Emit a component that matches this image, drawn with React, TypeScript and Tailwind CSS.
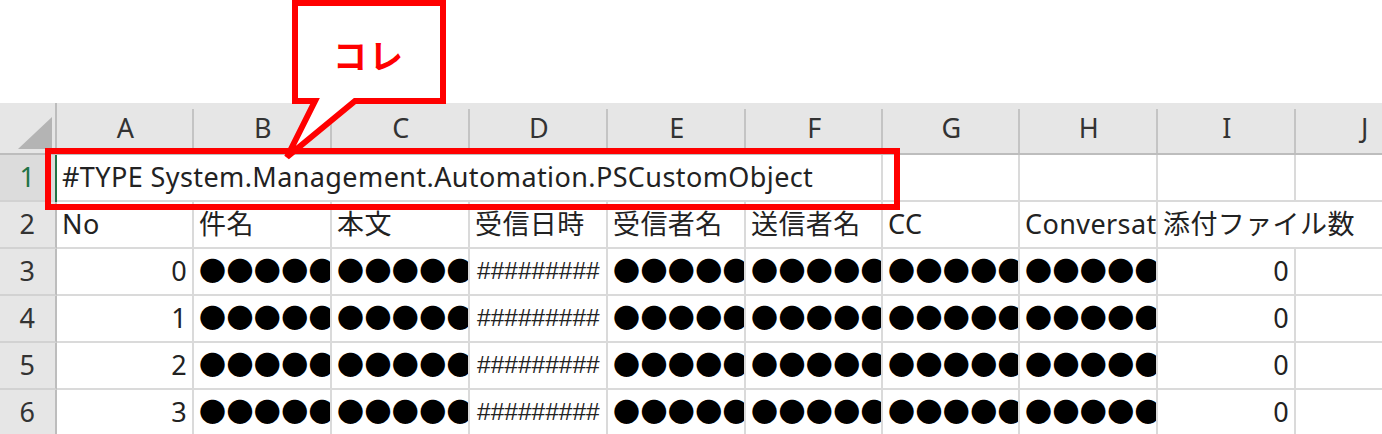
import React from 'react';

const cols = ['A', 'B', 'C', 'D', 'E', 'F', 'G', 'H', 'I', 'J'];
const dots = '●●●●●●●●●●●●';

const cell =
  'border-r-2 border-b-2 border-[#dadada] overflow-hidden whitespace-nowrap flex items-center px-[5px] bg-white';

function HeaderCell({ label }: { label: string }) {
  return (
    <div className="relative bg-[#e6e6e6] border-b-2 border-[#bdbdbd] flex items-center justify-center text-[#333] after:absolute after:right-0 after:top-[6px] after:bottom-0 after:w-[2px] after:bg-[#c4c4c4]">
      {label}
    </div>
  );
}

function RowHead({ n, active }: { n: number; active?: boolean }) {
  return (
    <div
      className={`border-r-2 border-b-2 border-r-[#bdbdbd] border-b-[#d2d2d2] flex items-center justify-center ${
        active ? 'bg-[#dcdcdc] text-[#217346]' : 'bg-[#e6e6e6] text-[#333]'
      }`}
    >
      {n}
    </div>
  );
}

function DataRow({ n, no }: { n: number; no: number }) {
  return (
    <>
      <RowHead n={n} />
      <div className={`${cell} justify-end`}>{no}</div>
      <div className={`${cell} text-black`}>{dots}</div>
      <div className={`${cell} text-black`}>{dots}</div>
      <div className={`${cell} text-[24.5px] tracking-normal pl-[7px] pr-0 font-['Liberation_Sans',sans-serif]`}>
        #########
      </div>
      <div className={`${cell} text-black`}>{dots}</div>
      <div className={`${cell} text-black`}>{dots}</div>
      <div className={`${cell} text-black`}>{dots}</div>
      <div className={`${cell} text-black`}>{dots}</div>
      <div className={`${cell} justify-end`}>0</div>
      <div className={cell}></div>
    </>
  );
}

export default function App() {
  return (
    <div className="relative w-[1382px] h-[434px] overflow-hidden bg-white text-[27px] tracking-[0.4px] text-[#222] font-['Noto_Sans','Noto_Sans_CJK_JP',sans-serif]">
      <div className="h-[103px]" />

      <div className="grid grid-cols-[57px_137px_138px_138px_138px_138px_137px_137px_138px_138px_138px] grid-rows-[52px_repeat(6,47px)] w-[1434px]">
        {/* corner */}
        <div className="relative bg-[#e6e6e6] border-r-2 border-b-2 border-[#bdbdbd]">
          <svg className="absolute left-0 top-0" width="57" height="52" viewBox="0 0 57 52">
            <polygon points="18,46 52,46 52,14" fill="#b4b4b4" />
          </svg>
        </div>
        {cols.map((c) => (
          <HeaderCell key={c} label={c} />
        ))}

        {/* row 1 */}
        <RowHead n={1} active />
        <div className={`${cell} col-span-6`}>#TYPE System.Management.Automation.PSCustomObject</div>
        <div className={cell}></div>
        <div className={cell}></div>
        <div className={cell}></div>
        <div className={cell}></div>

        {/* row 2 */}
        <RowHead n={2} />
        <div className={cell}>No</div>
        <div className={cell}>件名</div>
        <div className={cell}>本文</div>
        <div className={cell}>受信日時</div>
        <div className={cell}>受信者名</div>
        <div className={cell}>送信者名</div>
        <div className={cell}>CC</div>
        <div className={cell}>Conversat</div>
        <div className={`${cell} col-span-2`}>添付ファイル数</div>

        <DataRow n={3} no={0} />
        <DataRow n={4} no={1} />
        <DataRow n={5} no={2} />
        <DataRow n={6} no={3} />
      </div>

      {/* active cell left edge */}
      <div className="absolute left-[55px] top-[155px] w-[2px] h-[47px] bg-[#217346]" />

      {/* highlight box */}
      <div className="absolute left-[45px] top-[148px] w-[855px] h-[62px] border-[6px] border-[#ff0000]" />

      {/* callout */}
      <svg className="absolute left-0 top-0" width="460" height="170" viewBox="0 0 460 170">
        <polygon
          points="295,3 443,3 443,101 355,101 287,157 315,101 295,101"
          fill="#ffffff"
          stroke="#ff0000"
          strokeWidth="6"
          strokeLinejoin="miter"
        />
      </svg>
      <div className="absolute left-[292px] top-[2px] w-[154px] h-[104px] flex items-center justify-center text-[34px] tracking-[2px] font-bold text-[#ff0000] font-['Noto_Sans_CJK_JP',sans-serif]">
        コレ
      </div>
    </div>
  );
}
